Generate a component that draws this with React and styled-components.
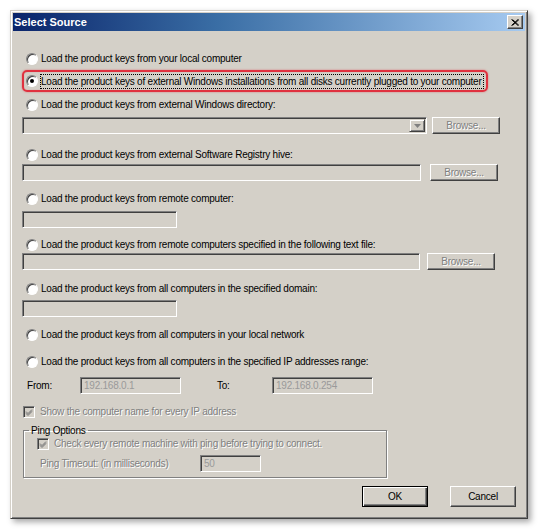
import React from "react";
import styled, { createGlobalStyle } from "styled-components";

const GlobalStyle = createGlobalStyle`
	html, body {
		margin: 0;
		padding: 0;
		background: #ffffff;
	}
	body {
		font-family: "Liberation Sans", Arial, sans-serif;
		font-size: 10px;
		letter-spacing: -0.23px;
		color: #000;
	}
`;

const Page = styled.div`
	width: 540px;
	height: 529px;
	padding: 10px 0 0 10px;
	box-sizing: border-box;
`;

const Window = styled.div`
	width: 518px;
	height: 509px;
	box-sizing: border-box;
	background: #d4d0c8;
	border: 1px solid;
	border-color: #d4d0c8 #404040 #404040 #d4d0c8;
	box-shadow: inset 1px 1px 0 #ffffff, inset -1px -1px 0 #808080,
		3px 3px 6px rgba(0, 0, 0, 0.35);
	padding: 2px;
	display: flex;
	flex-direction: column;
`;

const TitleBar = styled.div`
	height: 18px;
	display: flex;
	align-items: center;
	justify-content: space-between;
	padding: 0 2px 0 1px;
	background: linear-gradient(to right, #0a246a 0%, #3a6ea5 40%, #a6caf0 100%);
`;

const Title = styled.span`
	font-family: "Liberation Sans", Arial, sans-serif;
	font-weight: bold;
	font-size: 11px;
	letter-spacing: 0;
	color: #fff;
`;

const CloseButton = styled.div`
	width: 14px;
	height: 12px;
	background: #d4d0c8;
	border: 1px solid;
	border-color: #ffffff #404040 #404040 #ffffff;
	box-shadow: inset -1px -1px 0 #808080;
	display: flex;
	align-items: center;
	justify-content: center;
`;

const Body = styled.div`
	flex: 1;
	display: flex;
	flex-direction: column;
	padding: 21px 9px 0 9px;
`;

const Radio = styled.div`
	display: flex;
	align-items: center;
	height: 13px;
	margin-top: ${(p) => p.$mt || 0}px;
	margin-left: 4px;
	gap: 2px;
	white-space: nowrap;
`;

const RadioCircle = styled.span`
	width: 12px;
	height: 12px;
	box-sizing: border-box;
	border-radius: 50%;
	background: #fff;
	border: 1px solid;
	border-color: #808080 #ffffff #ffffff #808080;
	box-shadow: inset 1px 1px 0 #404040;
	display: flex;
	align-items: center;
	justify-content: center;
	flex-shrink: 0;

	&::after {
		content: "";
		display: ${(p) => (p.$checked ? "block" : "none")};
		width: 4px;
		height: 4px;
		border-radius: 50%;
		background: #000;
	}
`;

const Label = styled.span`
	padding: 1px 1px 1px 0;
	border: 1px ${(p) => (p.$focus ? "dotted #000" : "solid transparent")};
	line-height: 11px;
`;

const Highlight = styled.div`
	margin-top: 5px;
	width: 466px;
	height: 22px;
	box-sizing: border-box;
	border: 2px solid #e0313f;
	border-radius: 5px;
	box-shadow: 0 0 2px rgba(224, 49, 63, 0.6), inset 0 0 1px rgba(224, 49, 63, 0.5);
	display: flex;
	align-items: center;

	${Radio} {
		margin-left: 2px;
	}
`;

const FieldRow = styled.div`
	display: flex;
	align-items: center;
	margin-top: ${(p) => p.$mt || 0}px;
`;

const Field = styled.div`
	width: ${(p) => p.$w}px;
	height: 17px;
	box-sizing: border-box;
	background: #d4d0c8;
	border: 1px solid;
	border-color: #808080 #ffffff #ffffff #808080;
	box-shadow: inset 1px 1px 0 #404040, inset -1px -1px 0 #d4d0c8;
	display: flex;
	align-items: center;
	justify-content: flex-end;
	padding: 0 2px 0 3px;
	flex-shrink: 0;
	margin-left: ${(p) => p.$ml || 0}px;
`;

const FieldText = styled.span`
	flex: 1;
	color: #9a9a9a;
`;

const DropArrow = styled.div`
	width: 16px;
	height: 13px;
	box-sizing: border-box;
	background: #d4d0c8;
	border: 1px solid;
	border-color: #d4d0c8 #404040 #404040 #d4d0c8;
	box-shadow: inset 1px 1px 0 #ffffff, inset -1px -1px 0 #808080;
	display: flex;
	align-items: center;
	justify-content: center;
	margin-right: -1px;
`;

const Button = styled.div`
	width: ${(p) => p.$w || 68}px;
	height: ${(p) => p.$h || 17}px;
	box-sizing: border-box;
	background: #d4d0c8;
	border: 1px solid;
	border-color: ${(p) =>
		p.$default ? "#000 #000 #000 #000" : "#ffffff #404040 #404040 #ffffff"};
	box-shadow: ${(p) =>
		p.$default
			? "inset 1px 1px 0 #ffffff, inset -1px -1px 0 #404040, inset -2px -2px 0 #808080"
			: "inset -1px -1px 0 #808080"};
	display: flex;
	align-items: center;
	justify-content: center;
	color: ${(p) => (p.$disabled ? "#808080" : "#000")};
	text-shadow: ${(p) => (p.$disabled ? "1px 1px 0 #ffffff" : "none")};
	flex-shrink: 0;
	margin-left: ${(p) => p.$ml || 0}px;
`;

const FieldLabel = styled.span`
	width: ${(p) => p.$w}px;
	box-sizing: border-box;
	padding-left: ${(p) => p.$pl || 0}px;
	flex-shrink: 0;
	color: ${(p) => (p.$disabled ? "#808080" : "#000")};
	text-shadow: ${(p) => (p.$disabled ? "1px 1px 0 #ffffff" : "none")};
`;

const Check = styled.div`
	display: flex;
	align-items: center;
	height: 13px;
	gap: 5px;
	margin-top: ${(p) => p.$mt || 0}px;
	margin-left: ${(p) => p.$ml || 0}px;
	color: #808080;
	text-shadow: 1px 1px 0 #ffffff;
	white-space: nowrap;
`;

const CheckBox = styled.span`
	width: 12px;
	height: 12px;
	box-sizing: border-box;
	background: #d4d0c8;
	border: 1px solid;
	border-color: #808080 #ffffff #ffffff #808080;
	box-shadow: inset 1px 1px 0 #404040;
	display: flex;
	align-items: center;
	justify-content: center;
	flex-shrink: 0;
	text-shadow: none;
`;

const Group = styled.fieldset`
	margin: 6px 0 0 1px;
	width: 364px;
	height: 54px;
	box-sizing: border-box;
	padding: 0;
	border: 1px solid #808080;
	box-shadow: inset 1px 1px 0 #ffffff, 1px 1px 0 #ffffff;
	display: flex;
	flex-direction: column;
`;

const Legend = styled.legend`
	margin-left: 5px;
	padding: 0 2px;
	line-height: 13px;
	color: #000;
`;

const Buttons = styled.div`
	display: flex;
	justify-content: flex-end;
	gap: 22px;
	margin-top: 8px;
`;

function Option({ mt, checked, focus, children }) {
	return (
		<Radio $mt={mt}>
			<RadioCircle $checked={checked} />
			<Label $focus={focus}>{children}</Label>
		</Radio>
	);
}

function Tick() {
	return (
		<svg width="8" height="8" viewBox="0 0 8 8">
			<path d="M1 3.5 L3 5.5 L7 1.5 M1 4.5 L3 6.5 L7 2.5 M1 5.5 L3 7.5 L7 3.5" stroke="#808080" strokeWidth="1" fill="none" />
		</svg>
	);
}

export default function App() {
	return (
		<>
			<GlobalStyle />
			<Page>
				<Window>
					<TitleBar>
						<Title>Select Source</Title>
						<CloseButton>
							<svg width="8" height="7" viewBox="0 0 8 7">
								<path d="M0.5 0.5 L7 6.5 M1.5 0.5 L8 6.5 M7 0.5 L0.5 6.5 M8 0.5 L1.5 6.5" stroke="#000" strokeWidth="1" />
							</svg>
						</CloseButton>
					</TitleBar>
					<Body>
						<Option>Load the product keys from your local computer</Option>
						<Highlight>
							<Option checked focus>
								Load the product keys of external Windows installations from all disks currently plugged to your computer
							</Option>
						</Highlight>
						<Option mt={6}>Load the product keys from external Windows directory:</Option>
						<FieldRow $mt={6}>
							<Field $w={405}>
								<DropArrow>
									<svg width="7" height="4" viewBox="0 0 7 4">
										<path d="M0 0 H7 L3.5 4 Z" fill="#808080" />
									</svg>
								</DropArrow>
							</Field>
							<Button $disabled $ml={5}>Browse...</Button>
						</FieldRow>
						<Option mt={14}>Load the product keys from external Software Registry hive:</Option>
						<FieldRow $mt={3}>
							<Field $w={399} />
							<Button $disabled $ml={9}>Browse...</Button>
						</FieldRow>
						<Option mt={11}>Load the product keys from remote computer:</Option>
						<FieldRow $mt={6}>
							<Field $w={155} />
						</FieldRow>
						<Option mt={10}>Load the product keys from remote computers specified in the following text file:</Option>
						<FieldRow $mt={2}>
							<Field $w={398} />
							<Button $disabled $ml={7}>Browse...</Button>
						</FieldRow>
						<Option mt={12}>Load the product keys from all computers in the specified domain:</Option>
						<FieldRow $mt={5}>
							<Field $w={155} />
						</FieldRow>
						<Option mt={11}>Load the product keys from all computers in your local network</Option>
						<Option mt={14}>Load the product keys from all computers in the specified IP addresses range:</Option>
						<FieldRow $mt={9}>
							<FieldLabel $w={58} $pl={5}>From:</FieldLabel>
							<Field $w={101}>
								<FieldText>192.168.0.1</FieldText>
							</Field>
							<FieldLabel $w={91} $pl={36}>To:</FieldLabel>
							<Field $w={101}>
								<FieldText>192.168.0.254</FieldText>
							</Field>
						</FieldRow>
						<Check $mt={11} $ml={1}>
							<CheckBox>
								<Tick />
							</CheckBox>
							Show the computer name for every IP address
						</Check>
						<Group>
							<Legend>Ping Options</Legend>
							<Check $ml={13}>
								<CheckBox>
									<Tick />
								</CheckBox>
								Check every remote machine with ping before trying to connect.
							</Check>
							<FieldRow $mt={5}>
								<FieldLabel $w={176} $pl={16} $disabled>
									Ping Timeout: (in milliseconds)
								</FieldLabel>
								<Field $w={61}>
									<FieldText>50</FieldText>
								</Field>
							</FieldRow>
						</Group>
						<Buttons>
							<Button $default $w={66} $h={21}>OK</Button>
							<Button $w={66} $h={21}>Cancel</Button>
						</Buttons>
					</Body>
				</Window>
			</Page>
		</>
	);
}
